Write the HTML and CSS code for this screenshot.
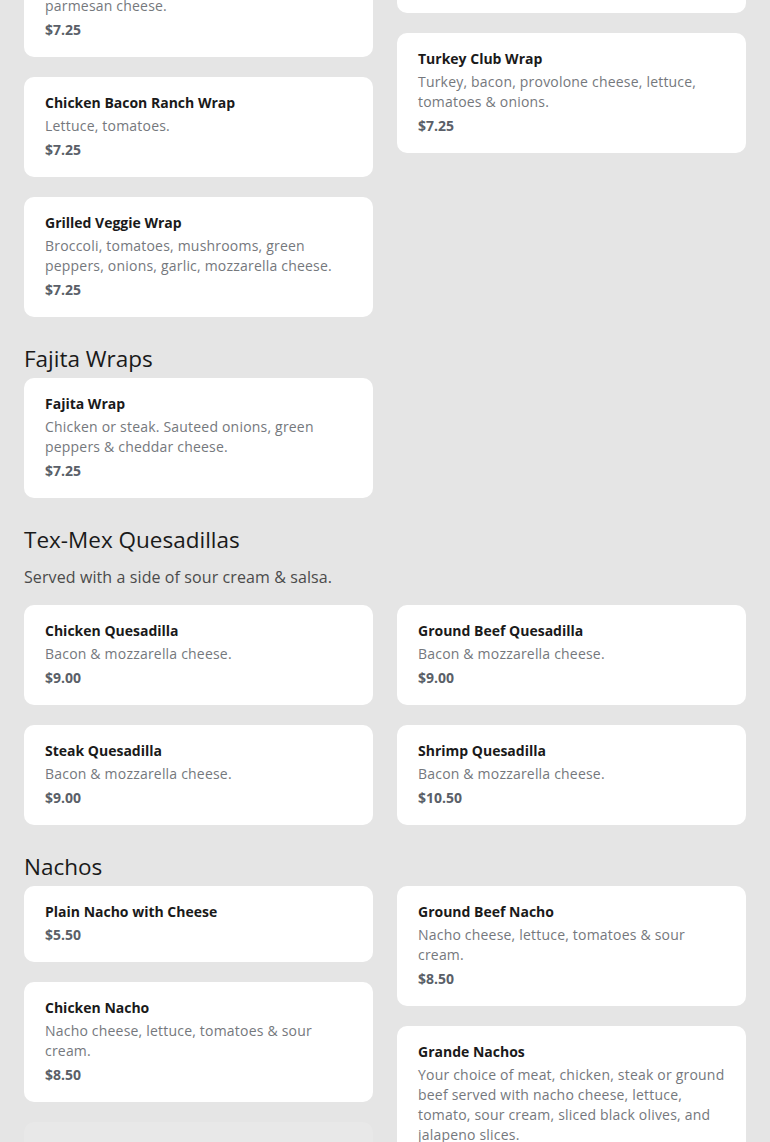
FILE: index.html
```html
<!DOCTYPE html>
<html lang="en">
<head>
<meta charset="utf-8">
<title>Menu</title>
<link rel="stylesheet" href="styles.css">
</head>
<body>
<main class="menu">
  <section class="section section-first">
    <div class="grid">
      <div class="col">
        <div class="card">
          <h3 class="item-name">Chicken Caesar Wrap</h3>
          <p class="item-desc">Grilled chicken, romaine lettuce, caesar &amp;<br>parmesan cheese.</p>
          <p class="item-price">$7.25</p>
        </div>
        <div class="card">
          <h3 class="item-name">Chicken Bacon Ranch Wrap</h3>
          <p class="item-desc">Lettuce, tomatoes.</p>
          <p class="item-price">$7.25</p>
        </div>
        <div class="card">
          <h3 class="item-name">Grilled Veggie Wrap</h3>
          <p class="item-desc">Broccoli, tomatoes, mushrooms, green peppers, onions, garlic, mozzarella cheese.</p>
          <p class="item-price">$7.25</p>
        </div>
      </div>
      <div class="col">
        <div class="card">
          <h3 class="item-name">Buffalo Chicken Wrap</h3>
          <p class="item-price">$7.25</p>
        </div>
        <div class="card">
          <h3 class="item-name">Turkey Club Wrap</h3>
          <p class="item-desc">Turkey, bacon, provolone cheese, lettuce, tomatoes &amp; onions.</p>
          <p class="item-price">$7.25</p>
        </div>
      </div>
    </div>
  </section>

  <section class="section">
    <h2 class="section-title">Fajita Wraps</h2>
    <div class="grid">
      <div class="col">
        <div class="card">
          <h3 class="item-name">Fajita Wrap</h3>
          <p class="item-desc">Chicken or steak. Sauteed onions, green peppers &amp; cheddar cheese.</p>
          <p class="item-price">$7.25</p>
        </div>
      </div>
      <div class="col"></div>
    </div>
  </section>

  <section class="section">
    <h2 class="section-title">Tex-Mex Quesadillas</h2>
    <p class="section-note">Served with a side of sour cream &amp; salsa.</p>
    <div class="grid">
      <div class="col">
        <div class="card">
          <h3 class="item-name">Chicken Quesadilla</h3>
          <p class="item-desc">Bacon &amp; mozzarella cheese.</p>
          <p class="item-price">$9.00</p>
        </div>
        <div class="card">
          <h3 class="item-name">Steak Quesadilla</h3>
          <p class="item-desc">Bacon &amp; mozzarella cheese.</p>
          <p class="item-price">$9.00</p>
        </div>
      </div>
      <div class="col">
        <div class="card">
          <h3 class="item-name">Ground Beef Quesadilla</h3>
          <p class="item-desc">Bacon &amp; mozzarella cheese.</p>
          <p class="item-price">$9.00</p>
        </div>
        <div class="card">
          <h3 class="item-name">Shrimp Quesadilla</h3>
          <p class="item-desc">Bacon &amp; mozzarella cheese.</p>
          <p class="item-price">$10.50</p>
        </div>
      </div>
    </div>
  </section>

  <section class="section">
    <h2 class="section-title">Nachos</h2>
    <div class="grid">
      <div class="col">
        <div class="card">
          <h3 class="item-name">Plain Nacho with Cheese</h3>
          <p class="item-price">$5.50</p>
        </div>
        <div class="card">
          <h3 class="item-name">Chicken Nacho</h3>
          <p class="item-desc">Nacho cheese, lettuce, tomatoes &amp; sour cream.</p>
          <p class="item-price">$8.50</p>
        </div>
        <div class="card card-fading">
          <h3 class="item-name">Steak Nacho</h3>
          <p class="item-desc">Nacho cheese, lettuce, tomatoes &amp; sour cream.</p>
          <p class="item-price">$8.50</p>
        </div>
      </div>
      <div class="col">
        <div class="card">
          <h3 class="item-name">Ground Beef Nacho</h3>
          <p class="item-desc">Nacho cheese, lettuce, tomatoes &amp; sour cream.</p>
          <p class="item-price">$8.50</p>
        </div>
        <div class="card">
          <h3 class="item-name">Grande Nachos</h3>
          <p class="item-desc">Your choice of meat, chicken, steak or ground beef served with nacho cheese, lettuce, tomato, sour cream, sliced black olives, and jalapeno slices.</p>
          <p class="item-price">$11.00</p>
        </div>
      </div>
    </div>
  </section>
</main>
</body>
</html>
```

FILE: styles.css
```css
html, body {
  margin: 0;
  padding: 0;
  background: #e5e5e5;
}

body {
  font-family: "Open Sans", "Liberation Sans", sans-serif;
  color: #1a1a1a;
  overflow: hidden;
}

.menu {
  padding: 0 24px;
}

.section-first {
  margin-top: -63px;
}

.section {
  padding-bottom: 26px;
}

.section-title {
  margin: 0 0 3px;
  font-size: 22.5px;
  line-height: 32px;
  font-weight: 400;
  color: #1a1a1a;
}

.section-note {
  margin: 9px 0 16px;
  font-size: 16px;
  line-height: 24px;
  letter-spacing: 0.1px;
  color: #4b4b4b;
}

.grid {
  display: grid;
  grid-template-columns: 1fr 1fr;
  column-gap: 24px;
  align-items: start;
}

.col {
  display: flex;
  flex-direction: column;
  gap: 20px;
}

.card {
  background: #ffffff;
  border-radius: 10px;
  padding: 16px 21px 17px;
  display: flex;
  flex-direction: column;
}

.card-fading {
  opacity: 0.12;
}

.item-name {
  margin: 0 0 3px;
  font-size: 14px;
  line-height: 20px;
  font-weight: 700;
  color: #1a1a1a;
}

.item-desc {
  margin: 0 0 4px;
  font-size: 14px;
  line-height: 20px;
  letter-spacing: 0.2px;
  color: #75787d;
}

.item-price {
  margin: 0;
  font-size: 14px;
  line-height: 20px;
  font-weight: 700;
  color: #5a5f68;
}
```
